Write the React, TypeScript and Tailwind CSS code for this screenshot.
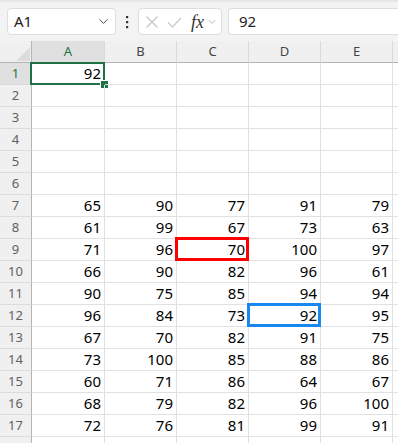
import { ChevronDown } from "lucide-react";

const data: (number | null)[][] = [
  [92, null, null, null, null],
  [null, null, null, null, null],
  [null, null, null, null, null],
  [null, null, null, null, null],
  [null, null, null, null, null],
  [null, null, null, null, null],
  [65, 90, 77, 91, 79],
  [61, 99, 67, 73, 63],
  [71, 96, 70, 100, 97],
  [66, 90, 82, 96, 61],
  [90, 75, 85, 94, 94],
  [96, 84, 73, 92, 95],
  [67, 70, 82, 91, 75],
  [73, 100, 85, 88, 86],
  [60, 71, 86, 64, 67],
  [68, 79, 82, 96, 100],
  [72, 76, 81, 99, 91],
  [null, null, null, null, null],
];

const cols = ["A", "B", "C", "D", "E", ""];

function Cell({ value, row, col }: { value: number | null; row: number; col: number }) {
  const isActive = row === 0 && col === 0;
  const isRed = row === 8 && col === 2;
  const isBlue = row === 11 && col === 3;
  return (
    <div className="relative h-[22px] border-r border-b border-[#e1e1e1] text-right pr-[3px] text-[15px] leading-[21px] text-black">
      {value ?? ""}
      {isActive && (
        <div className="absolute -left-[2px] -top-[1px] -right-[1px] -bottom-[1px] border-2 border-[#1e7145]">
          <div className="absolute -right-[6px] -bottom-[6px] w-[9px] h-[9px] bg-[#1e7145] border-[1.5px] border-white" />
        </div>
      )}
      {isRed && <div className="absolute -left-[2px] -top-[2px] -right-[1px] -bottom-[1px] border-[3px] border-[#ff0000]" />}
      {isBlue && <div className="absolute -left-[2px] -top-[2px] -right-[1px] -bottom-[1px] border-[3px] border-[#1688f0]" />}
    </div>
  );
}

export default function App() {
  return (
    <div className="w-[398px] h-[443px] overflow-hidden bg-white font-['Noto_Sans',sans-serif]">
      {/* formula bar */}
      <div className="h-[41px] bg-[#f3f3f3] border-t-2 border-[#e6e6e6] flex items-center pl-[7px]">
        <div className="w-[109px] h-[27px] shrink-0 bg-white border border-[#dedede] rounded-[4px] flex items-center justify-between pl-[6px] pr-[4px]">
          <span className="text-[15px] text-[#222]">A1</span>
          <ChevronDown size={15} strokeWidth={1.5} className="text-[#444]" />
        </div>
        <div className="w-[22px] shrink-0 flex justify-center">
          <svg width="4" height="14" viewBox="0 0 4 14">
            <rect x="1" y="1" width="2.2" height="2.2" fill="#333" />
            <rect x="1" y="6" width="2.2" height="2.2" fill="#333" />
            <rect x="1" y="11" width="2.2" height="2.2" fill="#333" />
          </svg>
        </div>
        <div className="w-[84px] h-[27px] shrink-0 bg-white border border-[#dedede] rounded-[4px] flex items-center pl-[6px]">
          <svg width="14" height="14" viewBox="0 0 14 14" className="mr-[8px]">
            <path d="M1.5 1.5 L12.5 12.5 M12.5 1.5 L1.5 12.5" stroke="#c4c4c4" strokeWidth="1.1" fill="none" />
          </svg>
          <svg width="15" height="14" viewBox="0 0 15 14" className="mr-[9px]">
            <path d="M1 7.5 L5.5 12 L14 3" stroke="#c4c4c4" strokeWidth="1.1" fill="none" />
          </svg>
          <span className="font-['Liberation_Serif',serif] italic text-[18px] leading-none text-[#333] mr-[2px]">fx</span>
          <ChevronDown size={12} strokeWidth={1.3} className="text-[#999]" />
        </div>
        <div className="ml-[6px] flex-1 h-[27px] bg-white border border-[#dedede] rounded-l-[4px] border-r-0 flex items-center pl-[10px] -mr-[10px]">
          <span className="text-[15px] text-[#222]">92</span>
        </div>
      </div>

      {/* grid */}
      <div className="grid grid-cols-[32px_73px_72px_72px_72px_72px_72px]">
        <div className="relative h-[22px] bg-[#f0f0f0] border-r border-b border-[#b4b4b4] overflow-hidden">
          <div className="absolute right-[1px] bottom-[1px] w-0 h-0 border-l-[14px] border-l-transparent border-b-[14px] border-b-[#dcdcdc]" />
        </div>
        {cols.map((c, i) => (
          <div
            key={i}
            className={`h-[22px] border-b border-b-[#b4b4b4] border-r border-r-[#dadada] flex items-center justify-center text-[13px] ${
              i === 0 ? "bg-[#e0e0e0] text-[#1e7145]" : "bg-[#f0f0f0] text-[#444]"
            }`}
          >
            {c}
          </div>
        ))}
        {data.map((row, r) => (
          <div key={r} className="contents">
            <div
              className={`h-[22px] border-r border-r-[#b4b4b4] border-b border-b-[#dcdcdc] flex items-center justify-center text-[13px] ${
                r === 0 ? "bg-[#e0e0e0] text-[#1e7145]" : "bg-[#f0f0f0] text-[#616161]"
              }`}
            >
              {r < 17 ? r + 1 : ""}
            </div>
            {row.map((v, c) => (
              <Cell key={c} value={v} row={r} col={c} />
            ))}
            <Cell value={null} row={r} col={5} />
          </div>
        ))}
      </div>
    </div>
  );
}
